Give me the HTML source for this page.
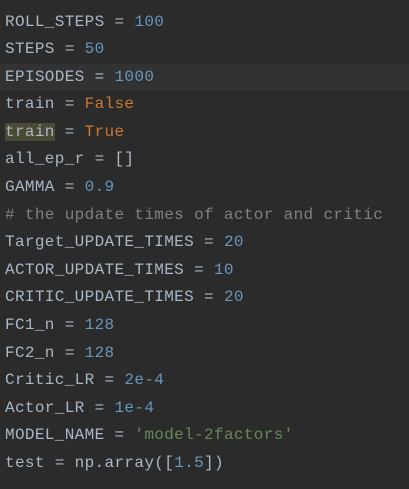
<!DOCTYPE html>
<html><head><meta charset="utf-8"><style>
html,body{margin:0;padding:0;width:409px;height:489px;overflow:hidden;background:#2b2b2b}
.c{position:absolute;left:0;top:8.5px;width:409px;font-family:"Liberation Mono",monospace;font-size:16px;letter-spacing:0.35px;color:#a9b7c6}
.l{height:27.6px;line-height:27.6px;padding-left:5px;white-space:pre}
.cur{background:#323232}
.n{color:#6897bb}.k{color:#cc7832}.s{color:#6a8759}.m{color:#808080}
.h{background:#4b4a33}
</style></head><body>
<div class="c">
<div class="l">ROLL_STEPS = <span class="n">100</span></div>
<div class="l">STEPS = <span class="n">50</span></div>
<div class="l cur">EPISODES = <span class="n">1000</span></div>
<div class="l">train = <span class="k">False</span></div>
<div class="l"><span class="h">train</span> = <span class="k">True</span></div>
<div class="l">all_ep_r = []</div>
<div class="l">GAMMA = <span class="n">0.9</span></div>
<div class="l m"># the update times of actor and critic</div>
<div class="l">Target_UPDATE_TIMES = <span class="n">20</span></div>
<div class="l">ACTOR_UPDATE_TIMES = <span class="n">10</span></div>
<div class="l">CRITIC_UPDATE_TIMES = <span class="n">20</span></div>
<div class="l">FC1_n = <span class="n">128</span></div>
<div class="l">FC2_n = <span class="n">128</span></div>
<div class="l">Critic_LR = <span class="n">2e-4</span></div>
<div class="l">Actor_LR = <span class="n">1e-4</span></div>
<div class="l">MODEL_NAME = <span class="s">'model-2factors'</span></div>
<div class="l">test = np.array([<span class="n">1.5</span>])</div>
</div>
</body></html>
